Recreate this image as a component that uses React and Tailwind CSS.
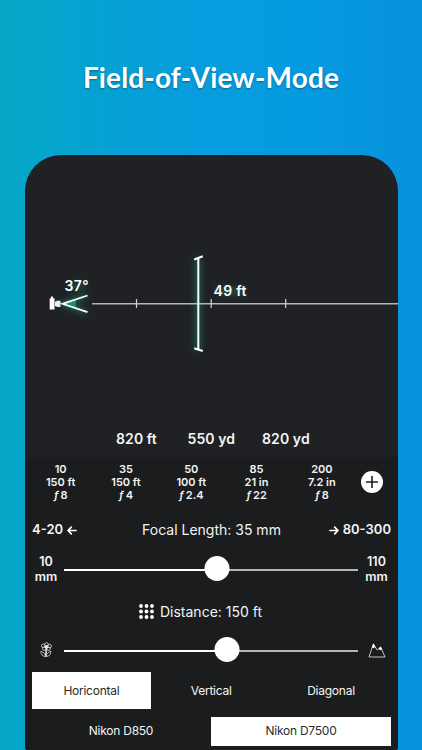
import clsx from "clsx";

const presets = [
  { focal: "10", distance: "150 ft", aperture: "8" },
  { focal: "35", distance: "150 ft", aperture: "4" },
  { focal: "50", distance: "100 ft", aperture: "2.4" },
  { focal: "85", distance: "21 in", aperture: "22" },
  { focal: "200", distance: "7.2 in", aperture: "8" },
];

const modes = ["Horicontal", "Vertical", "Diagonal"];
const cameras = ["Nikon D850", "Nikon D7500"];

function FieldOfView() {
  return (
    <svg className="block h-[262px] w-full" viewBox="25 155 373 262" fill="none">
      <defs>
        <filter id="glow" filterUnits="userSpaceOnUse" x="25" y="230" width="373" height="150">
          <feGaussianBlur stdDeviation="3" />
        </filter>
      </defs>

      {/* glow under the cone, the bracket and the labels */}
      <g filter="url(#glow)" stroke="#15a873" strokeWidth="5" opacity="0.6">
        <path d="M86 296L64 304l22 8" strokeWidth="4" />
        <path d="M198 258v92" strokeWidth="4.5" />
        <path d="M216 291h28" strokeWidth="9" opacity="0.45" />
        <path d="M68 286h18" strokeWidth="8" opacity="0.4" />
      </g>

      {/* distance axis */}
      <path d="M92 303.7H398" stroke="#b4b5b6" strokeWidth="1.5" />
      <path d="M136.5 299v9M211.2 299v9M285.7 299v9" stroke="#d4d5d5" strokeWidth="1.2" />

      {/* camera */}
      <path d="M49.7 298.3h1.3v-1.8h2v1.8h1.5v11.200h-4.800z" fill="#fff" />
      <path d="M55 301.5h1.5v-.7H60.5v6.2H56.500v-.7H55z" fill="#e5f4ee" />
      <path d="M63 303.8l13-4.3v8.6z" fill="#1b8b63" />
      <path d="M87.5 295.5L62.5 303.8l25 8.4" stroke="#fff" strokeWidth="1.8" />

      {/* field of view bracket */}
      <path d="M198.3 258v91.5" stroke="#fff" strokeWidth="2" />
      <path d="M194.2 259.5l8.600-3.300M194.2 348.2l8.600 2.800" stroke="#fff" strokeWidth="2" />

      <g fill="#fff" fontFamily="Inter, sans-serif" fontSize="14" fontWeight="600">
        <text x="64.6" y="290.5" textLength="24">37°</text>
        <text x="213.5" y="295.5" textLength="33">49 ft</text>
      </g>
    </svg>
  );
}

function Slider({ value, left, right }) {
  return (
    <div className="flex h-[32px] items-center">
      <div className="flex w-[39px] justify-center pl-[3px]">{left}</div>
      <div className="relative flex h-[25px] w-[294px] items-center">
        <div className="mt-px h-[2px] w-full bg-[#b5b5b6]" />
        <div className="absolute left-0 top-[12px] h-[2px] bg-white" style={{ width: value }} />
        <div
          className="absolute -top-px size-[25px] -translate-x-1/2 rounded-full bg-white"
          style={{ left: value }}
        />
      </div>
      <div className="flex w-[40px] justify-center pr-[3px]">{right}</div>
    </div>
  );
}

function RangeLabel({ value }) {
  return (
    <div className="text-center text-[12.5px] font-semibold leading-[15px]">
      {value}
      <br />
      mm
    </div>
  );
}

function FlowerIcon() {
  return (
    <svg className="h-[16px] w-[12px]" viewBox="0 0 12 16" fill="none" stroke="#e8e8e8" strokeWidth="0.75">
      <circle cx="6.5" cy="2.5" r="1.8" />
      <circle cx="3.2" cy="3.8" r="1.8" />
      <circle cx="9.6" cy="4" r="1.8" />
      <circle cx="4.2" cy="6.8" r="1.7" />
      <circle cx="8.6" cy="6.8" r="1.7" />
      <circle cx="6.4" cy="4.8" r="1.3" fill="#fff" />
      <path d="M6.3 6L5.8 14.5" strokeWidth="1.5" />
      <path d="M5.5 14.5C2.5 14.500 1 12.500.8 9.500c2.700.4 4.600 2 4.700 5zM6 14.500c3 0 4.800-2 5-5-2.700.4-4.700 2-5 5z" />
    </svg>
  );
}

function MountainIcon() {
  return (
    <svg className="h-[16px] w-[18px]" viewBox="0 0 18 16" fill="none">
      <path d="M1 15L5.3 2l3.8 6 3.6-2.8L17 15z" stroke="#d8d8d8" strokeWidth="0.9" />
      <path d="M5.3 1.3L8 5.8 6.7 5l-1 1.2L4 5.4zM12.8 4.5l1.6 3.7-1.5-.7-1 1-1.2-2.2z" fill="#fff" />
    </svg>
  );
}

function ArrowLeft({ className }) {
  return (
    <svg
      className={clsx("h-[9px] w-[10px]", className)}
      viewBox="0 0 10 9"
      fill="none"
      stroke="#fff"
      strokeWidth="1.7"
      strokeLinecap="round"
      strokeLinejoin="round"
    >
      <path d="M9 4.5H1M4.3 1.2L1 4.5l3.3 3.3" />
    </svg>
  );
}

export default function App() {
  return (
    <div className="h-[750px] w-[422px] overflow-hidden bg-[linear-gradient(90deg,#04a7c6_0%,#079ddd_45%,#069ae1_75%,#0692db_100%)] font-['Inter',sans-serif] text-[#f4f4f4]">
      <h1 className="h-[155px] whitespace-nowrap pt-[59px] text-center font-['Lato',sans-serif] text-[28px] font-bold leading-[36px] tracking-[0.15px] text-white [text-shadow:0_1px_2px_rgba(0,0,0,0.35)]">
        Field-of-View-Mode
      </h1>

      <div className="ml-[25px] h-[595px] w-[373px] overflow-hidden rounded-t-[36px] rounded-b-[3px] bg-[#202125]">
        <FieldOfView />

        <div className="flex h-[40px] whitespace-nowrap pl-[91px] text-[14px] font-semibold leading-[44px] tracking-[0.1px]">
          <span className="w-[71.5px]">820 ft</span>
          <span className="w-[74.5px]">550 yd</span>
          <span>820 yd</span>
        </div>

        <div className="h-[293px] bg-[#1a1c1e]">
          <div className="flex h-[50px] items-center pl-[3px]">
            {presets.map((p) => (
              <div
                key={p.focal}
                className="w-[65.3px] pt-px text-center text-[11px] font-semibold leading-[12.8px]"
              >
                <p>{p.focal}</p>
                <p>{p.distance}</p>
                <p>
                  <i className="mr-[2px]">ƒ</i>
                  {p.aperture}
                </p>
              </div>
            ))}
            <button className="ml-[7px] flex size-[22px] items-center justify-center rounded-full bg-white">
              <svg className="size-[14px]" viewBox="0 0 14 14" stroke="#1a1c1e" strokeWidth="1.6">
                <path d="M7 1v12M1 7h12" />
              </svg>
            </button>
          </div>

          <div className="flex h-[46px] items-center justify-between whitespace-nowrap px-[7px] text-[13px] font-semibold">
            <span className="flex w-[70px] items-center gap-1">
              4-20
              <ArrowLeft />
            </span>
            <span className="pb-[2px] text-[14px] font-normal">Focal Length: 35 mm</span>
            <span className="flex w-[70px] items-center justify-end gap-1">
              <ArrowLeft className="rotate-180" />
              80-300
            </span>
          </div>

          <Slider value={153} left={<RangeLabel value="10" />} right={<RangeLabel value="110" />} />

          <div className="flex h-[49px] items-center justify-center gap-[6px] pr-[22px] pt-[3px] text-[14px]">
            <svg className="size-[15px]" viewBox="0 0 15 15" fill="#fff">
              {[2, 7.5, 13].map((y) => [2, 7.5, 13].map((x) => <circle key={x + "-" + y} cx={x} cy={y} r="1.9" />))}
            </svg>
            Distance: 150 ft
          </div>

          <Slider value={163} left={<FlowerIcon />} right={<MountainIcon />} />

          <div className="mt-[6px] flex pl-[6.5px] text-[12px] tracking-[-0.25px]">
            {modes.map((mode) => (
              <button
                key={mode}
                className={clsx(
                  "h-[37px] w-[119.8px]",
                  mode === "Horicontal" && "bg-white text-[#2a2b2d]"
                )}
              >
                {mode}
              </button>
            ))}
          </div>

          <div className="mt-[8px] flex pl-[6px] text-[12px] tracking-[-0.25px]">
            {cameras.map((camera) => (
              <button
                key={camera}
                className={clsx(
                  "h-[29px] w-[180px] pb-px",
                  camera === "Nikon D7500" && "bg-white text-[#2a2b2d]"
                )}
              >
                {camera}
              </button>
            ))}
          </div>
        </div>
      </div>
    </div>
  );
}
